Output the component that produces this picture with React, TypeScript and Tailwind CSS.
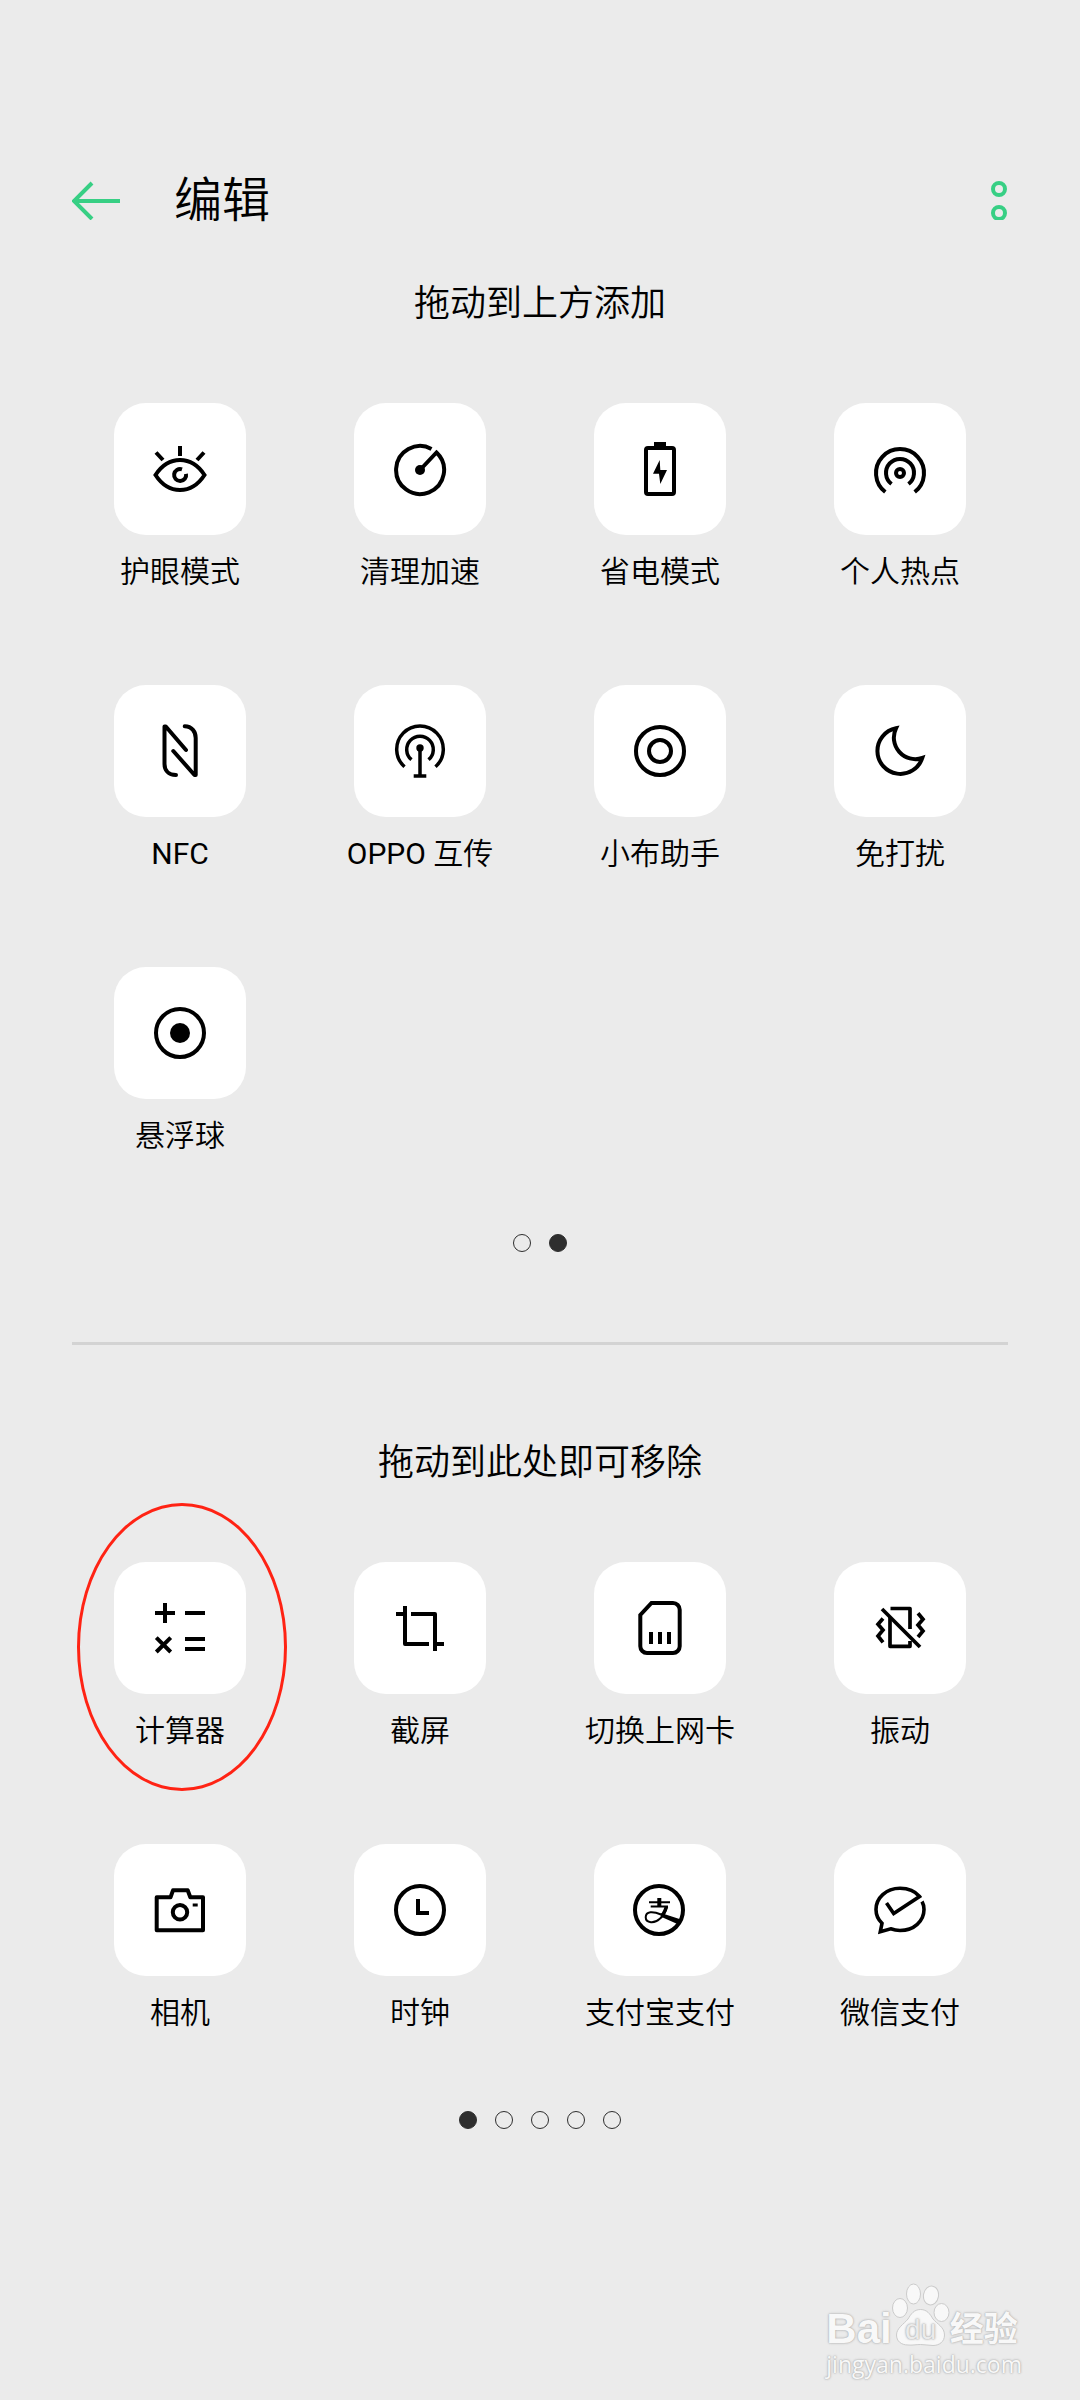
import { useState } from 'react';
import type { ReactNode } from 'react';

type Tile = {
  label: string;
  icon: ReactNode;
  marked?: boolean;
};

const availableTiles: Tile[] = [
  {
    label: '护眼模式',
    icon: (
      <>
        <path d="M5.5 36C12 26 20 21 30 21S48 26 54.5 36C48 46 40 51 30 51S12 46 5.5 36Z" />
        <path d="M30 7V17M6 13.5L13 21M54 13.5L47 21" />
        <path d="M32 30.3A6 6 0 1 0 36 34.8" />
      </>
    ),
  },
  {
    label: '清理加速',
    icon: (
      <>
        <path d="M30 31L46.5 13.5A24 24 0 1 1 41.5 9.9" />
        <circle cx="30" cy="31" r="5" fill="currentColor" stroke="none" />
      </>
    ),
  },
  {
    label: '省电模式',
    icon: (
      <>
        <rect x="16" y="9" width="28" height="46" rx="2" />
        <path d="M24 3H36V8H24Z" fill="currentColor" stroke="none" />
        <path d="M29.7 21L23 34.7H29L30.3 45L37 31H30.3Z" fill="currentColor" stroke="none" />
      </>
    ),
  },
  {
    label: '个人热点',
    icon: (
      <>
        <path d="M15.3 53A24 24 0 1 1 44.7 53" />
        <path d="M21.5 45A14 14 0 1 1 38.5 45" />
        <circle cx="30" cy="34" r="4" />
      </>
    ),
  },
  {
    label: 'NFC',
    icon: (
      <g strokeLinecap="round" strokeLinejoin="round">
        <path d="M26 54C18 54 14.5 49 14.5 43V5.5H15.8L36 29" />
        <path d="M34.7 5.3C42 5.3 45.7 11 45.7 17V54H44.5L23.3 30" />
      </g>
    ),
  },
  {
    label: 'OPPO 互传',
    icon: (
      <g strokeWidth="3.5">
        <path d="M14.5 45.7A23.3 23.3 0 1 1 45.5 45.7" />
        <path d="M21.5 38.7A13.3 13.3 0 1 1 38.5 38.7" />
        <path d="M30 28V55M23.7 55H36.3" />
        <circle cx="30" cy="27" r="3.7" fill="currentColor" stroke="none" />
      </g>
    ),
  },
  {
    label: '小布助手',
    icon: (
      <>
        <circle cx="30" cy="30" r="24" />
        <circle cx="30" cy="30" r="11" />
      </>
    ),
  },
  {
    label: '免打扰',
    icon: <path d="M26 7.3A23 23 0 1 0 52.3 37A21.5 21.5 0 0 1 26 7.3Z" />,
  },
  {
    label: '悬浮球',
    icon: (
      <>
        <circle cx="30" cy="30" r="24" />
        <circle cx="30" cy="30" r="10" fill="currentColor" stroke="none" />
      </>
    ),
  },
];

const activeTiles: Tile[] = [
  {
    label: '计算器',
    marked: true,
    icon: <path d="M5 15H25M15 5V25M35 15H55M6.3 39.7L20.7 54M20.7 39.7L6.3 54M35 41H55M35 51H55" />,
  },
  {
    label: '截屏',
    icon: (
      <g strokeLinejoin="round">
        <path d="M6 16H15M15 8V46H39" />
        <path d="M21 16H45V53M45 46H54" />
      </g>
    ),
  },
  {
    label: '切换上网卡',
    icon: (
      <>
        <path d="M21.5 5H43A6.7 6.7 0 0 1 49.7 11.7V48.3A6.7 6.7 0 0 1 43 55H17A6.7 6.7 0 0 1 10.3 48.3V17Z" />
        <path d="M21 34V46M30 34V46M39 34V46" />
      </>
    ),
  },
  {
    label: '振动',
    icon: (
      <g strokeWidth="3.7">
        <path d="M12 11L50 49" />
        <path d="M20 19V48.3H40V43M20.5 10.5H40V31" strokeLinejoin="round" />
        <path d="M13 20.5L8 26.3L13 32L8 38L13 44.3" />
        <path d="M48 15.3L53 21.3L48 27L53 33L48 39" />
      </g>
    ),
  },
  {
    label: '相机',
    icon: (
      <>
        <path
          d="M6.7 17.3H20.5L23 10.3H37.7L40.3 17.3H53V50.3H6.7Z"
          strokeLinejoin="round"
        />
        <circle cx="30" cy="32.3" r="7.2" />
        <path d="M42.7 25H47.7" strokeWidth="3" />
      </>
    ),
  },
  {
    label: '时钟',
    icon: (
      <>
        <circle cx="30" cy="30" r="24" />
        <path d="M28 19V33H39" />
      </>
    ),
  },
  {
    label: '支付宝支付',
    icon: (
      <>
        <circle cx="29" cy="30" r="24" />
        <path d="M29.3 18V26.5" />
        <path d="M19 22.3H40M20.7 26.5H38" strokeWidth="2" />
        <path
          d="M37 26.5C35.5 32 33 36.5 29.5 39C25 43.5 15.7 43.5 15.7 37.3C15.7 31 23 31 31 34.5"
          strokeWidth="2"
        />
        <path d="M36.5 26.5C35.5 30 34.5 32 33 34.5" strokeWidth="3.5" />
        <path d="M31 33L51 39.5L48.5 44.5L30.5 36.5Z" fill="currentColor" stroke="none" />
      </>
    ),
  },
  {
    label: '微信支付',
    icon: (
      <path
        strokeWidth="3.6"
        d="M16.5 23L23.7 33.5L49.5 16.5C45 11 38 8.3 30 8.3C16 8.3 6 18 6 29.5C6 35 8 39.5 12 43.3L10.3 51.7L20.7 48.8C24 50 27 50.5 30 50.5C44 50.5 54 41 54 29.5C54 26.5 53.3 23.8 52 21.5"
      />
    ),
  },
];

// Latin words need the regular weight to look even with the thinner Chinese text
function TileLabel({ text }: { text: string }) {
  return (
    <span className="mt-4 text-[30px] leading-[42px] whitespace-nowrap">
      {text.split(/([A-Z]+)/).map((part, i) =>
        i % 2 ? (
          <span key={i} className="font-normal">
            {part}
          </span>
        ) : (
          part
        ),
      )}
    </span>
  );
}

function TileGrid({ tiles }: { tiles: Tile[] }) {
  return (
    <ul className="grid grid-cols-4 gap-y-[92px] px-[60px]">
      {tiles.map((tile) => (
        <li key={tile.label} className="relative flex justify-center">
          <button type="button" className="flex flex-col items-center">
            <span className="flex size-[132px] items-center justify-center rounded-[32px] bg-white">
              <svg
                viewBox="0 0 60 60"
                className="size-[60px]"
                fill="none"
                stroke="currentColor"
                strokeWidth="4"
                aria-hidden="true"
              >
                {tile.icon}
              </svg>
            </span>
            <TileLabel text={tile.label} />
          </button>
          {tile.marked && (
            <span className="pointer-events-none absolute -top-[59px] left-1/2 h-[288px] w-[210px] -translate-x-[103px] rounded-[50%] border-3 border-[#ff2314]" />
          )}
        </li>
      ))}
    </ul>
  );
}

function Pager({ count, initial }: { count: number; initial: number }) {
  const [page, setPage] = useState(initial);

  return (
    <div className="mt-[77px] flex justify-center gap-[18px]">
      {Array.from({ length: count }, (_, i) => (
        <button
          key={i}
          type="button"
          aria-label={`第 ${i + 1} 页`}
          onClick={() => setPage(i)}
          className={`size-[18px] rounded-full border border-[#2e2e2e] ${i === page ? 'bg-[#2e2e2e]' : ''}`}
        />
      ))}
    </div>
  );
}

function Watermark() {
  return (
    <div className="absolute right-[58px] bottom-[19px] font-normal text-[#f8f8f8] [text-shadow:0_0_1px_#b4b4b4,0_0_2px_#b4b4b4,0_0_3px_#c8c8c8]">
      <div className="flex items-end">
        <span className="font-['Liberation_Sans',sans-serif] text-[42px] leading-[36px] font-bold">Bai</span>
        <div className="relative">
          <svg viewBox="0 0 58 64" className="h-[64px] w-[58px]" fill="#f8f8f8" stroke="#cbcbcb" aria-hidden="true">
            <ellipse cx="8" cy="25" rx="7.5" ry="9.5" />
            <ellipse cx="21.5" cy="11" rx="7" ry="10" />
            <ellipse cx="39" cy="12.5" rx="7.5" ry="9.5" transform="rotate(10 39 12.5)" />
            <ellipse cx="49.5" cy="29.5" rx="7.5" ry="9" />
            <path d="M28.5 26.5C35 26.5 38 31 41 36C45 41 52.5 44 52.5 52C52.5 59 47 62.5 41 62.5C37 62.5 33 61.5 28.5 61.5S20 62.5 16 62C9 62 4.5 58 4.5 52C4.5 45 12 41 16 36C19 31 22 26.5 28.5 26.5Z" />
          </svg>
          <span className="absolute inset-x-0 bottom-0 text-center font-['Liberation_Sans',sans-serif] text-[28px] leading-[34px] text-[#ebebeb]">
            du
          </span>
        </div>
        <span className="text-[34px] leading-[36px] font-bold">经验</span>
      </div>
      <p className="font-['Open_Sans',sans-serif] text-[23px] leading-[34px]">jingyan.baidu.com</p>
    </div>
  );
}

export default function App() {
  return (
    <div
      lang="zh-CN"
      className="relative min-h-screen bg-[#ebebeb] pt-40 font-[Roboto,'Noto_Sans_CJK_SC',sans-serif] font-[350] text-black"
    >
      <header className="flex h-20 items-center px-[72px]">
        <button type="button" aria-label="返回" className="text-[#37cf84]">
          <svg viewBox="0 0 48 40" className="h-10 w-12" fill="none" stroke="currentColor" strokeWidth="4">
            <path d="M2 21H48M20 3L2 21L20 39" />
          </svg>
        </button>
        <h1 className="mt-0.5 ml-[54px] flex-1 text-[48px] leading-[80px]">编辑</h1>
        <button type="button" aria-label="更多" className="text-[#37cf84]">
          <svg viewBox="0 0 18 40" className="h-10 w-[18px]" fill="none" stroke="currentColor" strokeWidth="4">
            <circle cx="9" cy="9" r="6" />
            <circle cx="9" cy="33" r="6" />
          </svg>
        </button>
      </header>

      <section>
        <h2 className="mt-[40px] mb-[75px] text-center text-[36px] leading-[48px]">拖动到上方添加</h2>
        <TileGrid tiles={availableTiles} />
        <Pager count={2} initial={1} />
      </section>

      <hr className="mx-[72px] mt-[90px] border-t-3 border-[#d3d3d3]" />

      <section className="pb-[271px]">
        <h2 className="mt-[94px] mb-[75px] text-center text-[36px] leading-[48px]">拖动到此处即可移除</h2>
        <TileGrid tiles={activeTiles} />
        <Pager count={5} initial={0} />
      </section>

      <Watermark />
    </div>
  );
}
